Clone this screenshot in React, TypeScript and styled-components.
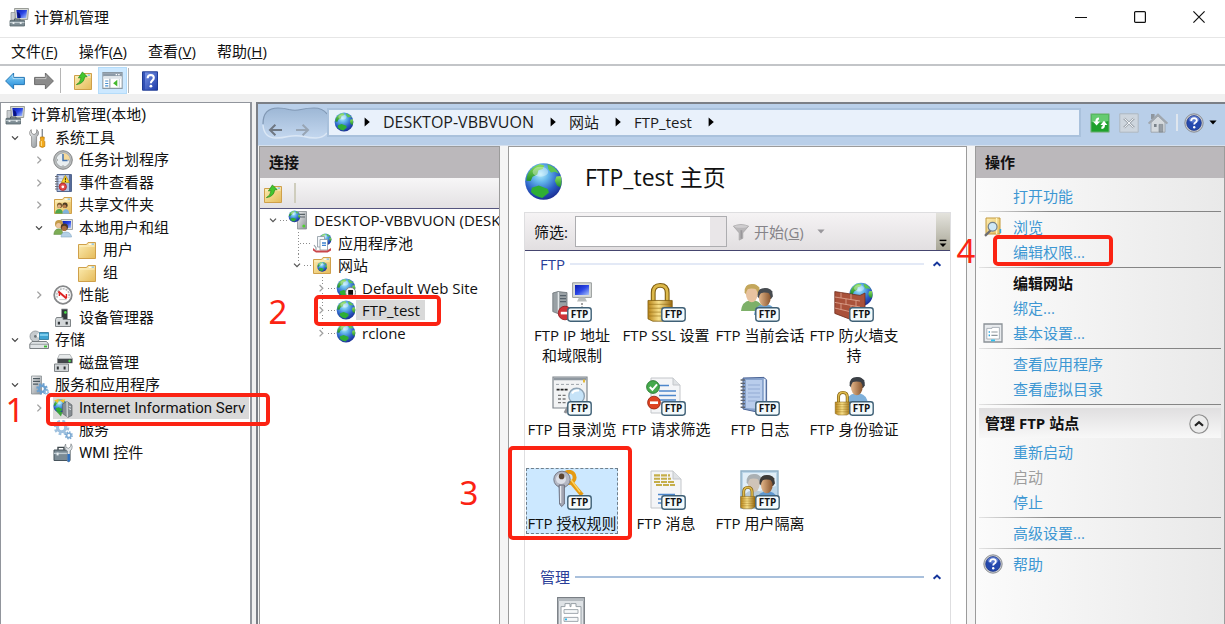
import React, { ReactNode } from "react";
import styled, { createGlobalStyle, css } from "styled-components";

const GlobalStyle = createGlobalStyle`
  *, *::before, *::after { box-sizing: border-box; }
  body {
    margin: 0;
    background: #f0f0f0;
    color: #111;
    font-family: "Open Sans", "Noto Sans CJK SC", sans-serif;
    font-size: 15px;
    line-height: 20px;
  }
  button, input, select { font: inherit; color: inherit; }
  ul { list-style: none; margin: 0; padding: 0; }
  svg { display: block; flex: none; }
`;

const plainButton = css`
  background: none;
  border: 0;
  margin: 0;
  padding: 0;
  white-space: nowrap;
`;

/* ---------- window frame ---------- */

const Window = styled.div`
  position: relative;
  display: flex;
  flex-direction: column;
  height: 100vh;
  overflow: hidden;
`;

const TitleBar = styled.header`
  display: flex;
  align-items: center;
  gap: 5px;
  flex: none;
  height: 38px;
  padding: 0 11px 3px 9px;
  background: #fff;
  border-bottom: 1px solid #e6e6e6;
`;

const Title = styled.h1`
  flex: 1;
  margin: 0;
  font-size: 15px;
  font-weight: 400;
`;

const WindowButton = styled.button`
  ${plainButton}
  display: grid;
  place-items: center;
  width: 30px;
  height: 34px;
  margin-left: 24px;
`;

const MenuBar = styled.nav`
  display: flex;
  align-items: center;
  gap: 21px;
  flex: none;
  height: 28px;
  padding: 0 11px;
  background: #fff;
  border-bottom: 2px solid #c3c5c8;
`;

const MenuButton = styled.button`
  ${plainButton}
`;

const Toolbar = styled.div`
  display: flex;
  align-items: center;
  flex: none;
  height: 28px;
  padding-left: 5px;
  background: #fff;
`;

const ToolButton = styled.button<{ $on?: boolean; $gap?: number }>`
  ${plainButton}
  display: grid;
  place-items: center;
  width: ${(p) => (p.$on ? 29 : 20)}px;
  height: 27px;
  padding-top: 1px;
  margin-left: ${(p) => p.$gap ?? 0}px;
  background: ${(p) => (p.$on ? "#cce8ff" : "none")};
  border: ${(p) => (p.$on ? "1px solid #b4dcfa" : "0")};
`;

const ToolDivider = styled.span<{ $gap: number }>`
  width: 1px;
  height: 25px;
  margin-left: ${(p) => p.$gap}px;
  background: #b5b5b5;
`;

const Workspace = styled.div`
  display: flex;
  flex: 1;
  min-height: 0;
  gap: 4px;
  padding-top: 8px;
  background: #f0f0f0;
`;

/* ---------- left tree ---------- */

const Sidebar = styled.aside`
  flex: none;
  width: 252px;
  overflow: hidden;
  padding-top: 1px;
  font-family: Roboto, "Noto Sans CJK SC", sans-serif;
  background: #fff;
  border: 2px solid #91959c;
  border-width: 1px 2px 0 1px;
`;

const SideTree = styled.ul`
  display: grid;
  grid-auto-rows: 1fr;
  min-height: 360px;
`;

const SideRow = styled.li<{ $level: number }>`
  display: flex;
  align-items: center;
  padding-left: ${(p) => (p.$level === 0 ? 4 : 4 + 24 * (p.$level - 1))}px;
`;

const Twisty = styled.span`
  display: grid;
  place-items: center;
  flex: none;
  width: 20px;
  margin-right: 4px;
`;

const TreeButton = styled.button<{ $selected?: boolean }>`
  ${plainButton}
  display: flex;
  align-items: center;
  gap: 6px;
  height: 22px;
  padding-right: 4px;
  background: ${(p) => (p.$selected ? "#d9d9d9" : "none")};
`;

/* ---------- IIS console ---------- */

const Console = styled.main`
  display: flex;
  flex-direction: column;
  flex: 1;
  min-width: 0;
  background: #f5f5f5;
  border: solid #7b7f86;
  border-width: 2px 0 0 2px;
`;

const AddressBar = styled.div`
  display: flex;
  align-items: center;
  flex: none;
  height: 42px;
  padding: 0 8px 4px 4px;
  background: #b9cfe9;
  border-bottom: 1px solid #d5e0ee;
`;

const Breadcrumb = styled.nav`
  display: flex;
  align-items: center;
  gap: 13px;
  flex: 1;
  min-width: 0;
  height: 29px;
  padding: 0 0 2px 5px;
  background: #e9f1fb;
  border: 2px solid #a9c1dc;
`;

const CrumbIcon = styled.span`
  margin-right: -3px;
`;

const Crumb = styled.a<{ $host?: boolean }>`
  padding-right: 3px;
  font-size: ${(p) => (p.$host ? 16 : 15)}px;
  color: #1c1c1c;
  text-decoration: none;
  white-space: nowrap;
`;

const AddressTools = styled.div`
  display: flex;
  align-items: center;
  gap: 9px;
  margin-left: 9px;
`;

const HelpMenu = styled.div`
  display: flex;
  align-items: center;
  gap: 5px;
`;

const AddressDivider = styled.span`
  width: 2px;
  height: 17px;
  margin: 0 -3px 0 -1px;
  background: #dfe6ee;
`;

const Panes = styled.div`
  display: flex;
  flex: 1;
  min-height: 0;
  padding-left: 1px;
  gap: 8px;
`;

const Pane = styled.section<{ $width?: number; $tint?: boolean }>`
  display: flex;
  flex-direction: column;
  flex: ${(p) => (p.$width ? "none" : "1")};
  width: ${(p) => (p.$width ? `${p.$width}px` : "auto")};
  min-width: 0;
  overflow: hidden;
  background: ${(p) => (p.$tint ? "linear-gradient(90deg, #fbfbfb, #e9e9e9)" : "#fff")};
  border: 1px solid #9b9b9b;
  border-bottom: 0;
`;

const PaneTitle = styled.h2`
  flex: none;
  margin: 0;
  height: 31px;
  padding: 5px 9px;
  font-size: 15px;
  font-weight: 700;
  background: #bbb8bb;
`;

const PaneTools = styled.div`
  display: flex;
  align-items: center;
  gap: 11px;
  flex: none;
  height: 31px;
  padding-left: 3px;
  background: linear-gradient(#f7f6f7, #e3e1e3);
  border-bottom: 1px solid #55557f;
`;

const GripLine = styled.span`
  width: 2px;
  height: 20px;
  background: #cfcdbd;
`;

const SiteTree = styled.ul`
  display: grid;
  grid-auto-rows: 1fr;
  min-height: 135px;
`;

const SiteRow = styled.li<{ $level: number }>`
  display: flex;
  align-items: center;
  padding-left: ${(p) => 6 + 24 * p.$level}px;
`;

const SiteButton = styled.button`
  ${plainButton}
  display: flex;
  align-items: center;
`;

const SiteLabel = styled.span<{ $selected?: boolean }>`
  padding: 0 5px 0 6px;
  background: ${(p) => (p.$selected ? "#d9d9d9" : "none")};
`;

/* ---------- feature view ---------- */

const PageHead = styled.div`
  display: flex;
  align-items: flex-start;
  gap: 22px;
  flex: none;
  height: 65px;
  padding: 15px 15px 0;
`;

const PageTitle = styled.h2`
  margin: 0;
  font-size: 23px;
  line-height: 30px;
  font-weight: 400;
`;

const FeatureBox = styled.div`
  display: flex;
  flex-direction: column;
  flex: 1;
  min-height: 0;
  margin: 0 15px;
  border: 1px solid #dedee0;
  border-bottom: 0;
`;

const FilterBar = styled.div`
  display: flex;
  align-items: center;
  flex: none;
  height: 38px;
  padding-left: 9px;
  background: linear-gradient(#f5f3f4, #e2dfe1);
  border-bottom: 1px solid #45456f;
`;

const FilterField = styled.div`
  display: flex;
  width: 152px;
  height: 31px;
  margin-left: 7px;
  border: 1px solid #adadb0;
`;

const FilterInput = styled.input`
  flex: 1;
  min-width: 0;
  padding: 0 4px;
  border: 0;
  background: #fff;
`;

const FilterDrop = styled.button`
  ${plainButton}
  width: 16px;
  background: #e9e6e8;
`;

const StartButton = styled.button`
  ${plainButton}
  display: flex;
  align-items: center;
  gap: 4px;
  margin-left: 5px;
  color: #868489;
`;

const Overflow = styled.button`
  ${plainButton}
  display: flex;
  align-items: flex-end;
  justify-content: center;
  align-self: stretch;
  width: 14px;
  margin-left: auto;
  padding-bottom: 2px;
  background: linear-gradient(#e4e3dd, #a9a797);
`;

const GroupHead = styled.div<{ $line: string }>`
  display: flex;
  align-items: center;
  gap: 5px;
  height: 26px;
  padding: 0 8px 0 15px;
  color: #2a3e98;

  &::after {
    content: "";
    order: 1;
    flex: 1;
    height: 2px;
    background: ${(p) => p.$line};
  }
`;

const GroupToggle = styled.button`
  ${plainButton}
  order: 2;
  padding-left: 3px;
`;

const GroupTitle = styled.h3`
  margin: 0;
  font-size: 15px;
  font-weight: 400;
`;

const Tiles = styled.div`
  display: grid;
  grid-template-columns: repeat(auto-fill, 92px);
  grid-auto-rows: 94px;
  column-gap: 2px;
  padding: 3px 40px 0 1px;
  margin-bottom: 2px;
`;

const Tile = styled.button<{ $selected?: boolean }>`
  ${plainButton}
  display: flex;
  flex-direction: column;
  align-items: center;
  align-self: start;
  min-height: 66px;
  gap: 3px;
  padding-top: 1px;
  line-height: 20px;
  white-space: pre;
  background: ${(p) => (p.$selected ? "#cce8ff" : "none")};
  border: 1px dashed ${(p) => (p.$selected ? "#6f7f8c" : "transparent")};
`;

/* ---------- actions ---------- */

const ActionBody = styled.div`
  display: flex;
  flex-direction: column;
  padding: 6px 3px 0;
`;

const actionRow = css`
  display: flex;
  align-items: center;
  height: 25px;
  padding-bottom: 2px;
`;

const ActionRow = styled.div`
  ${actionRow}
`;

const ActionIcon = styled.span`
  width: 20px;
  margin: 0 10px 0 4px;
`;

const ActionLink = styled.a`
  color: #3d97d3;
  text-decoration: none;
`;

const ActionDisabled = styled.span`
  color: #9d9d9d;
`;

const ActionHeading = styled.h3`
  ${actionRow}
  margin: 0 0 0 34px;
  font-size: 15px;
  font-weight: 700;
`;

const Rule = styled.div`
  flex: none;
  height: 6px;
  padding-top: 2px;

  &::before {
    content: "";
    display: block;
    height: 1px;
    background: linear-gradient(90deg, #e4e4e4, #858585 30%);
  }
`;

const ActionSection = styled.div`
  display: flex;
  align-items: center;
  justify-content: space-between;
  height: 30px;
  padding: 0 12px 0 6px;
  margin: 0 0 2px;
  background: linear-gradient(#e0dfe0, #f8f8f8);
`;

const SectionTitle = styled.h3`
  margin: 0;
  font-size: 15px;
  font-weight: 700;
`;

/* ---------- step markers over the window ---------- */

type Side = "left" | "right";

const Frame = styled.div<{ $side: Side; $x: number; $y: number; $w: number; $h: number }>`
  position: absolute;
  ${(p) => p.$side}: ${(p) => p.$x}px;
  top: ${(p) => p.$y}px;
  width: ${(p) => p.$w}px;
  height: ${(p) => p.$h}px;
  border: 4px solid #fb2313;
  border-radius: 5px;
  pointer-events: none;
`;

const Step = styled.span<{ $side: Side; $x: number; $y: number }>`
  position: absolute;
  ${(p) => p.$side}: ${(p) => p.$x}px;
  top: ${(p) => p.$y}px;
  width: 20px;
  text-align: center;
  color: #fb2313;
  font-family: "Noto Sans", sans-serif;
  font-size: 33px;
  line-height: 34px;
  pointer-events: none;
`;

/* ---------- drawings ---------- */

const Defs = () => (
  <svg width="0" height="0" style={{ position: "absolute" }} aria-hidden="true">
    <defs>
      <radialGradient id="sea" cx="0.42" cy="0.3" r="0.75">
        <stop offset="0" stopColor="#b4ecfc" />
        <stop offset="0.3" stopColor="#62b4ea" />
        <stop offset="0.65" stopColor="#2c5fc6" />
        <stop offset="1" stopColor="#18268c" />
      </radialGradient>
      <linearGradient id="land" x1="0" y1="0" x2="0" y2="1">
        <stop offset="0" stopColor="#8ce05a" />
        <stop offset="1" stopColor="#1f8f2c" />
      </linearGradient>
      <linearGradient id="screen" x1="0" y1="0" x2="1" y2="1">
        <stop offset="0" stopColor="#0a1db0" />
        <stop offset="0.5" stopColor="#2b46e6" />
        <stop offset="1" stopColor="#a9c4fb" />
      </linearGradient>
      <linearGradient id="folder" x1="0" y1="0" x2="1" y2="1">
        <stop offset="0" stopColor="#fdeeb4" />
        <stop offset="1" stopColor="#e5bb5a" />
      </linearGradient>
      <linearGradient id="steel" x1="0" y1="0" x2="1" y2="1">
        <stop offset="0" stopColor="#f1f2f3" />
        <stop offset="1" stopColor="#8a9095" />
      </linearGradient>
      <linearGradient id="gold" x1="0" y1="0" x2="1" y2="0">
        <stop offset="0" stopColor="#b88419" />
        <stop offset="0.45" stopColor="#f8e08a" />
        <stop offset="1" stopColor="#9a6a10" />
      </linearGradient>
      <linearGradient id="blueArrow" x1="0" y1="0" x2="0" y2="1">
        <stop offset="0" stopColor="#8fd8fb" />
        <stop offset="1" stopColor="#1d86d6" />
      </linearGradient>
      <linearGradient id="bookBlue" x1="0" y1="0" x2="1" y2="1">
        <stop offset="0" stopColor="#7f9bea" />
        <stop offset="1" stopColor="#1c3aa8" />
      </linearGradient>
      <linearGradient id="face" x1="0" y1="0" x2="1" y2="0">
        <stop offset="0" stopColor="#e3b68a" />
        <stop offset="1" stopColor="#8a562e" />
      </linearGradient>
      <linearGradient id="pill" x1="0" y1="0" x2="0" y2="1">
        <stop offset="0" stopColor="#9db7d5" />
        <stop offset="1" stopColor="#c3d7ef" />
      </linearGradient>
    </defs>
  </svg>
);

const Icon = ({ children, size = 20, box = 20 }: { children: ReactNode; size?: number; box?: number }) => (
  <svg width={size} height={size} viewBox={`0 0 ${box} ${box}`} aria-hidden="true">
    {children}
  </svg>
);

/* Globe shape centred on a 20 unit square. */
const GlobeShape = () => (
  <>
    <circle cx="10" cy="10" r="9.4" fill="url(#sea)" />
    <path d="M1.6 7Q3.4 2.6 8 1.2L10.4 1.8 9.6 3.6 7.4 4.2 6.8 6.4 4.4 7.6 3.4 9.8 1.2 9.6Z" fill="url(#land)" />
    <path d="M12 1.2Q16 2.4 18 6L15.8 5 13.8 5.4 12.4 3.4Z" fill="#5cc452" />
    <path d="M16.6 7.4L18.8 7.2Q19.8 10.2 18.6 13L17 12.2 15.8 9.8Z" fill="url(#land)" />
    <path d="M4 13.2L7.6 12 12.2 13.8 12.8 15.6 9.4 18.4Q5.8 17.8 3.6 15.4Z" fill="#2fae35" />
    <ellipse cx="8.4" cy="5" rx="4" ry="2.6" fill="#fff" opacity="0.35" />
  </>
);

const Globe = ({ size = 20 }: { size?: number }) => (
  <Icon size={size}>
    <GlobeShape />
  </Icon>
);

const ComputerIcon = () => (
  <Icon>
    <path d="M5.5 1.5H19.5L18.6 12.5H6.5Z" fill="#d6d9d5" stroke="#9a9d98" />
    <path d="M7.4 3H18L17.2 11H8.2Z" fill="url(#screen)" />
    <path d="M2 5.5H6V13H2Z" fill="#c9cdd0" stroke="#8b8f93" strokeWidth="0.7" />
    <path d="M8 5Q12 5.4 11.6 11H8.6Z" fill="#0a1480" />
    <path d="M1 13.5H15.5V19H1Z" fill="#7d8c93" stroke="#56646b" strokeWidth="0.8" />
    <path d="M1 15.6H15.5" stroke="#c5d0d4" />
    <path d="M3.6 15H5.4V17H3.6ZM10.8 15H12.6V17H10.8Z" fill="#e6ebed" />
    <path d="M5.5 13.5V12H11V13.5" fill="none" stroke="#4d5a60" />
  </Icon>
);

const ToolsIcon = () => (
  <Icon>
    <path
      d="M2.2 1.6L2.6 5.2 5 6.6 7.4 5.2 7.8 1.6Q10 3.4 9.4 6.2 9 7.8 7.6 8.6V18Q6.8 19.6 5 19.6 3 19.6 2.6 18V8.6Q.8 7.4.6 5.4.6 3 2.2 1.6Z"
      fill="url(#steel)"
      stroke="#777"
      strokeWidth="0.7"
    />
    <path d="M12.6 1H14V9H12.6Z" fill="#888e94" />
    <path d="M11.4 9H15.2V11.4L14.6 12 15.8 13.6V18.4Q13.4 20.4 10.8 18.4V13.6L12 12 11.4 11.4Z" fill="#f3a91c" stroke="#b87709" strokeWidth="0.7" />
    <path d="M12.4 13V18" stroke="#ffe08a" />
  </Icon>
);

const ClockIcon = () => (
  <Icon>
    <circle cx="10" cy="10" r="9.3" fill="#b9bcbd" stroke="#77797a" strokeWidth="0.9" />
    <circle cx="10" cy="10" r="7" fill="#e9eef0" stroke="#85898b" strokeWidth="0.6" />
    <path d="M10 10V3A7 7 0 0 1 17 10Z" fill="#f5d99a" />
    <path d="M10 4V10.6H14.6" fill="none" stroke="#4573ad" strokeWidth="1.5" />
    <path d="M4 10H5M15.4 10H16M10 15.4V16.4" stroke="#777" />
  </Icon>
);

const EventIcon = () => (
  <Icon>
    <path d="M4 1.5H18.5V18.5H4Z" fill="#aebfe0" stroke="#54688f" />
    <path d="M17 2V18" stroke="#3e558a" strokeWidth="1.6" />
    <path d="M6 4H10M6 7H9M6 10H8" stroke="#fff" />
    <path d="M2 3.5H5.4M2 6H5.4M2 8.5H5.4M2 11H5.4M2 13.5H5.4M2 16H5.4" stroke="#6a6f78" strokeWidth="1.1" />
    <path d="M12.4 2.4L16.6 9.6H8.4Z" fill="#ffd52e" stroke="#b18f08" strokeWidth="0.7" />
    <path d="M12.4 4.8V7.4M12.4 8V9" stroke="#3a3000" />
    <circle cx="9.8" cy="13.8" r="3.7" fill="#e24a4a" stroke="#a31919" strokeWidth="0.7" />
    <circle cx="9.8" cy="13.8" r="1.4" fill="#fff" />
  </Icon>
);

const FolderShape = () => (
  <>
    <path d="M1.5 18.5V4.5H9.5L11 2.5H18.5V18.5Z" fill="url(#folder)" stroke="#cfa04a" />
    <path d="M11.6 3.4H17.4V5H11.6Z" fill="#fffbe6" />
    <path d="M14.6 3.6H17V4.6H14.6Z" fill="#5aa8e0" />
    <path d="M2.4 6H17.6" stroke="#fff4c8" />
  </>
);

const FolderIcon = () => (
  <Icon>
    <FolderShape />
  </Icon>
);

const SharedFolderIcon = () => (
  <Icon>
    <FolderShape />
    <circle cx="6.6" cy="10.4" r="2.6" fill="#7d5a2c" />
    <circle cx="12" cy="10.2" r="2.6" fill="#4d3b22" />
    <circle cx="6.2" cy="11.2" r="1.7" fill="#e0b184" />
    <circle cx="11.6" cy="11.2" r="1.7" fill="#b97c4a" />
    <path d="M2 18.6Q2.6 14 6.4 14 9.6 14 10 18.6Z" fill="#4fa64d" />
    <path d="M9.4 18.8Q10 14.2 12.8 14.2 16 14.4 16.4 18.8Z" fill="#7fb2dd" />
  </Icon>
);

const UsersIcon = () => (
  <Icon>
    <path d="M8 1.5H19.5V11.5H8Z" fill="#dfe1e0" stroke="#a3a6a5" />
    <path d="M9.4 3H18V10H9.4Z" fill="url(#screen)" />
    <circle cx="6" cy="6" r="4" fill="#c49b48" />
    <circle cx="5.6" cy="7.4" r="2.5" fill="#ecc5a0" />
    <path d="M0.8 16.4Q1.4 10.8 5.8 10.8 9.6 10.8 9.8 16.4Z" fill="#7dad55" stroke="#578338" strokeWidth="0.5" />
    <circle cx="11.4" cy="9" r="3.6" fill="#4b3926" />
    <circle cx="11.2" cy="10.4" r="2.6" fill="#a86c3e" />
    <path d="M8 19Q8.4 14 13 14 17.8 14 18.6 19Z" fill="#b4d0e6" stroke="#86a9c6" strokeWidth="0.6" />
  </Icon>
);

const GaugeIcon = () => (
  <Icon>
    <circle cx="10" cy="10" r="8.8" fill="#fff" stroke="#858789" strokeWidth="1.8" />
    <path d="M4.4 12.6A6.2 6.2 0 1 1 15.6 12.6" fill="none" stroke="#b9bcbe" strokeWidth="1.6" strokeDasharray="2 1" />
    <path d="M5.4 6.4L13.6 13.6" stroke="#d22" strokeWidth="2" />
    <path d="M6.4 11V7.6M13.4 13V9" stroke="#d22" strokeWidth="1.4" />
    <path d="M6.4 14.6H13.6" stroke="#ccc" />
  </Icon>
);

const DeviceIcon = () => (
  <Icon>
    <path d="M8.5 1H14.5V11.5H8.5Z" fill="#33383b" stroke="#9a9ea1" strokeWidth="0.8" />
    <circle cx="12.4" cy="4.4" r="1.3" fill="#4be04b" />
    <path d="M3.5 9.5H10V11.5H17.5V18.5H2.5V11.5Z" fill="#d2d6d8" stroke="#7f8487" />
    <path d="M4.8 13.8H7V16.6H4.8ZM12.6 13.8H14.8V16.6H12.6Z" fill="#32373a" />
  </Icon>
);

const StorageIcon = () => (
  <Icon>
    <circle cx="6.4" cy="6.4" r="5.4" fill="#c6cbce" stroke="#8a9194" strokeWidth="0.8" />
    <path d="M6.4 6.4L10 2.4A5.4 5.4 0 0 1 11.4 8Z" fill="#f2f5f6" />
    <circle cx="6.4" cy="6.4" r="1.4" fill="#6d7478" />
    <path d="M10.5 2.5H19.5V9.5H10.5Z" fill="#3fa4d2" stroke="#2a7396" strokeWidth="0.8" />
    <path d="M10.8 5H19" stroke="#8ed8f4" strokeWidth="1.6" />
    <path d="M3 11.5H17.5L19.5 14V18.5H0.8V14Z" fill="#dfe3e5" stroke="#6d7376" strokeWidth="0.9" />
    <path d="M1 14.3H19.4" stroke="#8b9194" strokeWidth="0.8" />
    <path d="M15 15.6H18V17.4H15Z" fill="#3bb931" />
  </Icon>
);

const DiskIcon = () => (
  <Icon>
    <path d="M6.4 1.5H17L19.5 6H4.4Z" fill="#e6e9ea" stroke="#9da2a5" strokeWidth="0.7" />
    <path d="M4.4 5.8H19.5V10.2H4.4Z" fill="#43484b" />
    <circle cx="16.6" cy="8" r="1.2" fill="#4be04b" />
    <path d="M1.5 11H15.5V18.5H1.5Z" fill="#d2d6d8" stroke="#7f8487" />
    <path d="M3.8 13.6H5.8V16.4H3.8ZM10.6 13.6H12.6V16.4H10.6Z" fill="#32373a" />
  </Icon>
);

const Gear = ({ x, y, r, fill }: { x: number; y: number; r: number; fill: string }) => (
  <g transform={`translate(${x} ${y})`}>
    <circle r={r} fill="none" stroke={fill} strokeWidth={r * 0.5} strokeDasharray={`${r * 0.42} ${r * 0.365}`} />
    <circle r={r * 0.66} fill="none" stroke={fill} strokeWidth={r * 0.5} />
  </g>
);

const ServerAppsIcon = () => (
  <Icon>
    <path d="M2.5 1H12.5V19H2.5Z" fill="url(#steel)" stroke="#8c9296" strokeWidth="0.8" />
    <path d="M4 3.6H11M4 6.4H11M4 9.2H9" stroke="#4e5a61" strokeWidth="1.3" />
    <Gear x={13} y={13.8} r={4.6} fill="#6ba0cf" />
    <Gear x={17.6} y={17} r={2.2} fill="#8dbbe0" />
  </Icon>
);

const IisIcon = () => (
  <Icon>
    <g transform="scale(.72) translate(0 1)">
      <GlobeShape />
    </g>
    <path d="M1 2.6L5.8.8 5 4.8ZM6.6 2L10.4 5 12.4 1.2Z" fill="#f4c330" />
    <path d="M9.6 6L14 3.4 19 7V17.4L15 19.4 9.6 15.6Z" fill="#878e93" stroke="#5e6468" strokeWidth="0.7" />
    <path d="M14 3.4L14.4 19" stroke="#cdd3d6" strokeWidth="1.4" />
    <path d="M15.8 8L18 9M15.8 10.6L18 11.6" stroke="#e0e4e6" />
    <path d="M3 13L8 18.6 9.4 14Z" fill="#3ca53a" />
  </Icon>
);

const GearsIcon = () => (
  <Icon>
    <Gear x={8.6} y={7.6} r={6.2} fill="#9fc1df" />
    <Gear x={15.8} y={15.4} r={3.3} fill="#7fabd3" />
  </Icon>
);

const WmiIcon = () => (
  <Icon>
    <path d="M5 7V4.4H11V7" fill="none" stroke="#3f484d" strokeWidth="1.4" />
    <path d="M1 7H17V17.5H1Z" fill="#7b8b95" stroke="#47545c" />
    <path d="M1 10.4H17" stroke="#bfcbd2" strokeWidth="1.4" />
    <path d="M3.6 9.6H5.6V12.4H3.6Z" fill="#e9eef1" />
    <path d="M12.6 1L13 4.4 15.4 5.4 17.6 3.6 18 .8Q20 3.4 18.8 6 18 7.4 17 7.8V17.6Q16 20 14.4 18.4V8Q11.6 6.4 11.6 3.6Z" fill="#e1e5e8" stroke="#7b8286" strokeWidth="0.7" />
    <path d="M14.4 11H17V18Q15.8 20 14.4 18Z" fill="#2f71c0" />
  </Icon>
);

const ArrowIcon = ({ forward }: { forward?: boolean }) => (
  <Icon>
    <path
      d={forward ? "M19.4 10L11.4 2V6.4H.6V13.6H11.4V18Z" : "M.6 10L8.6 2V6.4H19.4V13.6H8.6V18Z"}
      fill={forward ? "#8b8b8b" : "url(#blueArrow)"}
      stroke={forward ? "#6b6b6b" : "#2577b5"}
      strokeLinejoin="round"
    />
    <path d={forward ? "M1.6 7.6H12V4.4" : "M8 4.4V7.6H18.4"} fill="none" stroke="#fff" opacity="0.45" />
  </Icon>
);

const FolderUpIcon = () => (
  <Icon>
    <FolderShape />
    <path d="M3.4 13.6Q7.6 12 8 6.6L5.4 7 9.4 1 14.2 5.6 11.6 6Q11 12.6 3.4 13.6Z" fill="#43c62e" stroke="#238a17" strokeWidth="0.7" />
  </Icon>
);

const PanelIcon = () => (
  <Icon size={21}>
    <path d="M.8 2.5H19.2V17.5H.8Z" fill="#fff" stroke="#8a98a3" />
    <path d="M1 3H19V6H1Z" fill="#8d9ba8" />
    <path d="M13 4.4H14.4M15.4 4.4H16.8" stroke="#fff" />
    <path d="M1.4 6.4H18.6V8.4H1.4Z" fill="#dfe5ea" />
    <path d="M7.5 8.4V17" stroke="#8a98a3" />
    <path d="M3 10.5H6M3 12.8H6M3 15.1H6" stroke="#4a90cf" />
    <path d="M14.6 9.4V15.8L10.6 12.6Z" fill="#44b82e" />
    <path d="M16.5 8.5V17" stroke="#c9d0d6" />
  </Icon>
);

const HelpBookIcon = () => (
  <Icon>
    <path d="M2.5.8H17.5V19.2H2.5Z" fill="url(#bookBlue)" stroke="#1f3b94" />
    <path d="M4 1V19" stroke="#2746ae" strokeWidth="1.6" />
    <path d="M7.6 7.2Q7.8 4 10.8 4 13.8 4.2 13.8 6.8 13.8 8.4 12.2 9.6 10.9 10.6 10.9 12.2" fill="none" stroke="#fff" strokeWidth="2.1" />
    <circle cx="10.9" cy="15.2" r="1.4" fill="#fff" />
  </Icon>
);

const HelpCircleIcon = () => (
  <Icon>
    <circle cx="10" cy="10" r="9.2" fill="#c9ccd0" stroke="#83878c" strokeWidth="0.9" />
    <circle cx="10" cy="10" r="7.4" fill="#2448ad" stroke="#172f7c" strokeWidth="0.6" />
    <ellipse cx="10" cy="6.4" rx="5.4" ry="3.4" fill="#7e9be4" opacity="0.6" />
    <path d="M7.2 8Q7.2 5.2 10.2 5.2 12.8 5.4 12.8 7.4 12.8 8.8 11.2 9.8 10.2 10.4 10.2 11.6" fill="none" stroke="#fff" strokeWidth="1.8" />
    <circle cx="10.2" cy="14.2" r="1.2" fill="#fff" />
  </Icon>
);

const RefreshIcon = () => (
  <Icon>
    <path d="M.8.8H19.2V19.2H.8Z" fill="#1fa12c" stroke="#8fb99a" />
    <path d="M1.6 1.6H18.4V8Q10 11 1.6 9Z" fill="#7ed987" opacity="0.75" />
    <path d="M9 4.4Q5.4 4.4 5.4 8.4H3L6.6 12.4 10 8.4H7.6Q7.6 6.8 9 6.6Z" fill="#fff" />
    <path d="M11.4 16Q15 16 15 12H17.4L14 7.8 10.4 12H12.8Q12.8 13.6 11.4 13.8Z" fill="#fff" />
  </Icon>
);

const StopIcon = () => (
  <Icon>
    <path d="M.8.8H19.2V19.2H.8Z" fill="#ced6de" stroke="#aeb8c1" />
    <path d="M5 5.4L15 14.6M15 5.4L5 14.6" stroke="#a3abb3" strokeWidth="2.6" />
    <path d="M5.4 5.4L14.6 14.6M14.6 5.4L5.4 14.6" stroke="#eef1f4" strokeWidth="1" />
  </Icon>
);

const HomeIcon = () => (
  <Icon>
    <path d="M3 1H6.6V6H3Z" fill="#8e969e" />
    <path d="M3 9.6L10 3 17 9.6V19.2H3Z" fill="#d5dade" stroke="#9ba3aa" strokeWidth="0.9" />
    <path d="M.6 10.6L10 1.6 19.4 10.6" fill="none" stroke="#a0a7ae" strokeWidth="2" />
    <path d="M6 11H8.6V14H6Z" fill="#7b838a" />
    <path d="M11 11.4H14.8V19H11Z" fill="#979ea5" stroke="#7b838a" strokeWidth="0.6" />
  </Icon>
);

const NavPill = () => (
  <svg width="65" height="36" viewBox="0 0 65 36" aria-hidden="true">
    <path d="M1 18Q1 3 16 3 22 3 27 4.5 33 6 39 4.5 45 3 52 3 61 3 65 9V28Q61 33 54 33 47 33 42 31.5 34 30 26 31.5 20 33 14 33 1 32 1 18Z" fill="url(#pill)" />
    <path d="M1 19Q1 3 16 3 22 3 27 4.5 33 6 39 4.5 45 3 52 3 61 3 65 9" fill="none" stroke="#8198b4" strokeWidth="1.2" />
    <path d="M1 20Q2 33 14 33 20 33 26 31.5 34 30 42 31.5 47 33 54 33 61 33 65 28" fill="none" stroke="#dbe7f5" strokeWidth="1.4" />
    <path d="M20 25H8.4M13.4 19.8L8 25 13.4 30.2" fill="none" stroke="#6f7782" strokeWidth="2" />
    <path d="M34 25H45.6M40.6 19.8L46 25 40.6 30.2" fill="none" stroke="#98a5b4" strokeWidth="2" />
  </svg>
);

const CrumbArrow = () => (
  <svg width="6" height="10" viewBox="0 0 6 10" aria-hidden="true">
    <path d="M.6.4L5.8 5 .6 9.6Z" fill="#000" />
  </svg>
);

const DownArrow = ({ color }: { color: string }) => (
  <svg width="8" height="5" viewBox="0 0 8 5" aria-hidden="true">
    <path d="M.4.4H7.6L4 4.6Z" fill={color} />
  </svg>
);

const Chevron = ({ open }: { open: boolean }) => (
  <svg width="10" height="10" viewBox="0 0 10 10" aria-hidden="true">
    <path
      d={open ? "M2 3.4L5 6.4 8 3.4" : "M3.4 1.6L6.8 5 3.4 8.4"}
      fill="none"
      stroke={open ? "#444" : "#a0a0a0"}
      strokeWidth="1.3"
    />
  </svg>
);

/* Expander plus the dotted guide lines that join a node to its parent. */
const Branch = ({ state, above, below }: { state: "open" | "closed" | "leaf"; above?: boolean; below?: boolean }) => (
  <svg width="22" height="22" viewBox="0 0 22 22" aria-hidden="true">
    <g stroke="#8c8c8c" strokeDasharray="1 2">
      {above && <path d="M8.5 0V7" />}
      {state === "leaf" && <path d="M8.5 0V22" />}
      {below && <path d="M8.5 16V22" />}
      <path d={state === "leaf" ? "M10 11.5H22" : "M14 11.5H22"} />
    </g>
    {state === "open" && <path d="M4 9.6L7 12.6 10 9.6" fill="none" stroke="#555" strokeWidth="1.3" />}
    {state === "closed" && <path d="M5.6 8L8.8 11.2 5.6 14.4" fill="none" stroke="#a0a0a0" strokeWidth="1.3" />}
  </svg>
);

const HostIcon = () => (
  <Icon>
    <path d="M9.5 1.5H18.5V19H9.5Z" fill="url(#steel)" stroke="#868d91" strokeWidth="0.8" />
    <path d="M11 4.4H17M11 7H17" stroke="#5a6368" strokeWidth="1.2" />
    <circle cx="15.8" cy="16" r="1.5" fill="#4fd12e" />
    <g transform="translate(.2 .2) scale(.62)">
      <GlobeShape />
    </g>
  </Icon>
);

const AppPoolIcon = () => (
  <Icon>
    <g transform="translate(7 0) scale(.64)">
      <GlobeShape />
    </g>
    <path d="M5.5 3.5H12.5V14H5.5Z" fill="#f4f7fa" stroke="#8c979f" strokeWidth="0.8" />
    <path d="M8 6.5H15.5V17H8Z" fill="#fff" stroke="#8c979f" strokeWidth="0.8" />
    <path d="M10 10H14M10 12.4H14" stroke="#3f83d0" strokeWidth="1.3" />
    <path d="M1 15L4 17.6H15L19 15V17.4L15.6 19.4H4L1 17.4Z" fill="#c9464a" />
    <path d="M2 12L4 14.6V17" fill="none" stroke="#9aa3aa" strokeWidth="1.2" />
  </Icon>
);

const SitesIcon = () => (
  <Icon>
    <FolderShape />
    <g transform="translate(5 6.6) scale(.52)">
      <GlobeShape />
    </g>
  </Icon>
);

const StoppedSiteIcon = () => (
  <Icon>
    <GlobeShape />
    <circle cx="14.6" cy="14.4" r="5" fill="#f4f4f4" stroke="#7d7d7d" strokeWidth="0.9" />
    <path d="M12.2 12H17V16.8H12.2Z" fill="#111" />
  </Icon>
);

const FunnelIcon = () => (
  <Icon size={18}>
    <path d="M1.5 3.5Q10 0 18.5 3.5L12 11V17L8 19V11Z" fill="#b9b7b9" stroke="#a5a3a5" strokeWidth="0.8" />
    <ellipse cx="10" cy="3.8" rx="7.4" ry="1.6" fill="#cfcdcf" />
    <path d="M10.4 8V17.4" stroke="#99979a" strokeWidth="2" />
  </Icon>
);

const BrowseIcon = () => (
  <Icon>
    <path d="M3 1H17V17H3Z" fill="url(#folder)" stroke="#c39a3c" />
    <path d="M13.6 1V17" stroke="#fff3bd" strokeWidth="1.4" />
    <path d="M8 13L2 18.8" stroke="#6d6d72" strokeWidth="2.4" />
    <circle cx="9.6" cy="9.8" r="4.4" fill="#cfe8f8" stroke="#73808c" strokeWidth="1.2" />
    <path d="M17.4 12V16" stroke="#36a6e2" strokeWidth="1.6" />
  </Icon>
);

const SettingsIcon = () => (
  <Icon>
    <path d="M1 1H19V19H1Z" fill="#e8ebee" stroke="#8b9197" strokeWidth="1.3" />
    <path d="M3.8 5.4H9V4.4H16.4V16H3.8Z" fill="#fff" stroke="#a5adb3" strokeWidth="0.9" />
    <path d="M5.6 9H7M5.6 12.4H7" stroke="#2fa6e0" strokeWidth="1.6" />
    <path d="M8.4 9H14.6M8.4 12.4H14.6" stroke="#8f979e" strokeWidth="1.2" />
    <path d="M8 17.4H12" stroke="#2fc0f0" strokeWidth="1.8" />
  </Icon>
);

const CollapseIcon = () => (
  <Icon>
    <circle cx="10" cy="10" r="9.2" fill="#ececec" stroke="#8e8e8e" strokeWidth="1.1" />
    <path d="M6 11.8L10 8.2 14 11.8" fill="none" stroke="#222" strokeWidth="2.2" />
  </Icon>
);

/* Tile art, drawn on a 40 unit square. */

const FtpBadge = () => (
  <g>
    <rect x="15.8" y="25.8" width="23.4" height="13.4" rx="2.6" fill="#f4fafc" stroke="#3f6076" strokeWidth="1.4" />
    <text x="27.6" y="36.2" textAnchor="middle" fontFamily="Open Sans, sans-serif" fontWeight="700" fontSize="10" fill="#111">
      FTP
    </text>
  </g>
);

const Padlock = ({ x = 0, y = 0, scale = 1 }: { x?: number; y?: number; scale?: number }) => (
  <g transform={`translate(${x} ${y}) scale(${scale})`}>
    <path d="M6.4 20V10Q6.4 2.4 13.6 2.4 20.8 2.4 20.8 10V20" fill="none" stroke="#7d5c10" strokeWidth="5" />
    <path d="M6.4 20V10Q6.4 2.4 13.6 2.4 20.8 2.4 20.8 10V20" fill="none" stroke="#dcb84a" strokeWidth="2.8" />
    <path d="M1 18H26V36L20 39.4H6L1 37Z" fill="url(#gold)" stroke="#7d5c10" strokeWidth="0.8" />
    <path d="M2 22H25M2 26H25M2 30H25M2 34H25" stroke="#916b13" strokeWidth="0.9" opacity="0.65" />
  </g>
);

const Person = ({ x, y, hair, shirt, skin = "url(#face)" }: { x: number; y: number; hair: string; shirt: string; skin?: string }) => (
  <g transform={`translate(${x} ${y})`}>
    <path d="M0 28Q1 18.6 8.6 17.6L14 17.6Q21 19 22 28Z" fill={shirt} />
    <path d="M3.6 9.6Q3 1 11 1 19.4 1 18.8 9.6L17 12H5.4Z" fill={hair} />
    <ellipse cx="10.8" cy="11.6" rx="5.8" ry="7.6" fill={skin} />
    <path d="M4.6 8Q8 3.6 17.2 7L18.6 4.6 13 1.2 6 2.6Z" fill={hair} />
  </g>
);

const IpArt = () => (
  <>
    <path d="M.8 11L6 9.6 15 10.6V30L7 32 .8 29.6Z" fill="#9aa1a5" stroke="#6b7276" strokeWidth="0.8" />
    <path d="M6.4 10V31.6" stroke="#e5e9eb" strokeWidth="1.4" />
    <path d="M8 13.6H14M8 16.6H14M8 19.6H14" stroke="#55606a" strokeWidth="1.2" />
    <path d="M20.6.8H39.4V15.4H20.6Z" fill="#d9dcdb" stroke="#989c9b" />
    <path d="M23 3H37V13H23Z" fill="url(#screen)" />
    <path d="M27 15.4H33L35 19.4H25Z" fill="#b9bdbc" />
    <path d="M30 21V26" stroke="#444" strokeDasharray="2 1.4" />
    <circle cx="13" cy="31" r="6.8" fill="#d03338" stroke="#8e1519" strokeWidth="0.8" />
    <path d="M8.8 29.8H17V32.4H8.8Z" fill="#fff" />
    <FtpBadge />
  </>
);

const SslArt = () => (
  <>
    <Padlock x={1} y={1} scale={0.97} />
    <FtpBadge />
  </>
);

const SessionsArt = () => (
  <>
    <Person x={1} y={1} hair="#c4a75c" shirt="#7db069" skin="#e8c3a0" />
    <Person x={14} y={5} hair="#474b50" shirt="#6ea3d0" />
    <FtpBadge />
  </>
);

const FirewallArt = () => (
  <>
    <g transform="translate(14.6 0) scale(1.24)">
      <GlobeShape />
    </g>
    <path d="M.8 9.6L26 13.4 31 11V29L18 38 .8 31.4Z" fill="#a9513a" stroke="#6e2c1c" strokeWidth="0.8" />
    <path d="M.8 15L26 19M.8 20.4L26 25M.8 26L24 31.6" stroke="#dba08c" strokeWidth="0.9" />
    <path d="M7 10.6V16M17 12V17.6M12 16.8V22.6M22 18.4V24.6M7 21.6V27.4M17 23.4V30" stroke="#dba08c" strokeWidth="0.9" />
    <FtpBadge />
  </>
);

const DirectoryArt = () => (
  <>
    <path d="M1 1H35V31L17 32H1Z" fill="#f2f3f4" stroke="#7f868c" strokeWidth="1.2" />
    <path d="M1.6 1.6H34.4V4.2H1.6Z" fill="#8f98a0" />
    <path d="M4 8.4H30" stroke="#9da4aa" strokeDasharray="3 2" />
    <path d="M32 3.6V6.6" stroke="#e3b83a" strokeWidth="2" />
    <path d="M4.6 13.6H16" stroke="#222" strokeWidth="1.6" strokeDasharray="3 1" />
    <path d="M6 19.4H14M6 23H14M6 26.6H14" stroke="#777" strokeWidth="1.4" strokeDasharray="3 1.6" />
    <circle cx="24.6" cy="20" r="7.8" fill="#c6e3f8" stroke="#8fa3b4" strokeWidth="1.4" />
    <path d="M20 17.4Q22 14 27 14.6" fill="none" stroke="#fff" strokeWidth="2" />
    <path d="M18.4 27L13 37" stroke="#8f8f94" strokeWidth="3" />
    <FtpBadge />
  </>
);

const RequestArt = () => (
  <>
    <path d="M5 2H27L34 9V37H5Z" fill="#f4f5f7" stroke="#c3c6ca" />
    <path d="M27 2V9H34" fill="#dfe2e5" stroke="#c3c6ca" />
    <path d="M13 9.6H23M13 15H30M13 19.6H30M13 24H30" stroke="#4d87cc" strokeWidth="1.5" />
    <circle cx="7" cy="11" r="6.4" fill="#45a94c" stroke="#1e7026" strokeWidth="0.8" />
    <path d="M3.8 11L6.4 13.8 11 8.4" fill="none" stroke="#fff" strokeWidth="2" />
    <circle cx="8" cy="26.6" r="6.4" fill="#dd4322" stroke="#951f0a" strokeWidth="0.8" />
    <path d="M4 25.4H12V28H4Z" fill="#fff" />
    <FtpBadge />
  </>
);

const LogArt = () => (
  <>
    <path d="M3 2L24 1.4 26.6 4V32L17 36 3 33Z" fill="#88a3cd" stroke="#4c6596" />
    <path d="M6 4H22V33L6 32Z" fill="#b9cdec" />
    <path d="M8 9H20M8 13H20M8 17H20M8 21H20M8 25H17" stroke="#93acd4" strokeWidth="1.1" />
    <path d="M24.6 3V30" stroke="#e6eefa" strokeWidth="1.6" />
    <path d="M.6 4H5M.6 7.4H5M.6 10.8H5M.6 14.2H5M.6 17.6H5M.6 21H5M.6 24.4H5M.6 27.8H5M.6 31.2H5" stroke="#60656d" strokeWidth="1.4" />
    <FtpBadge />
  </>
);

const AuthArt = () => (
  <>
    <Person x={12} y={0} hair="#3c4046" shirt="#7fb0da" />
    <Padlock x={0.6} y={15} scale={0.61} />
    <FtpBadge />
  </>
);

const RulesArt = () => (
  <>
    <circle cx="17" cy="7.4" r="5.6" fill="none" stroke="#e59a12" strokeWidth="4" />
    <path d="M19 12L30 25" stroke="#e59a12" strokeWidth="4.2" />
    <path d="M18.4 9L28 22" stroke="#ffd35e" strokeWidth="1.4" />
    <circle cx="10" cy="9.4" r="8.2" fill="#b4b7c3" stroke="#767a88" strokeWidth="1" />
    <circle cx="9" cy="9" r="5" fill="#dcdfe8" />
    <circle cx="9.6" cy="6.4" r="2.8" fill="#5b4634" />
    <path d="M7 15H12.4V34L9.6 36.6 7.6 34Z" fill="#a3a6b3" stroke="#666a78" strokeWidth="0.9" />
    <path d="M8.6 16V33" stroke="#e8eaf0" strokeWidth="1.3" />
    <FtpBadge />
  </>
);

const MessagesArt = () => (
  <>
    <path d="M5 1H27L35 9V38H5Z" fill="#f4f5f7" stroke="#c3c6ca" />
    <path d="M27 1V9H35" fill="#dfe2e5" stroke="#c3c6ca" />
    <path d="M8 5.4H24M8 8.8H25M8 12H29M10 15H29" stroke="#c5ae4a" strokeWidth="2.1" strokeDasharray="6 1" />
    <path d="M12 24.6H29M12 29H18M12 33H16" stroke="#4d87cc" strokeWidth="1.5" />
    <FtpBadge />
  </>
);

const IsolationArt = () => (
  <>
    <path d="M1 1H38V38H1Z" fill="#bcd6e8" stroke="#8fb0c6" strokeWidth="1.4" />
    <path d="M3 3H36V16L3 26Z" fill="#e1eef7" />
    <Person x={3} y={3} hair="#aab0b3" shirt="#b9cbd8" skin="#cfc4b8" />
    <Person x={16} y={4} hair="#3d3a38" shirt="#5e97cf" />
    <Padlock x={0} y={16} scale={0.58} />
    <FtpBadge />
  </>
);

const ConfigArt = () => (
  <>
    <path d="M5.8 2.8H32.2V42H5.8Z" fill="#dfe3e6" stroke="#797f85" strokeWidth="1.5" />
    <path d="M6 3.4H32V6H6Z" fill="#b5bbc0" />
    <path d="M9 11.6H13V8.6H18V11.6H19V8.6H24V11.6H29V42H9Z" fill="#fff" stroke="#98a0a6" />
    <path d="M12 14.6H26V18.4H12ZM12 22.4H26V26.4H12ZM12 30H26V34H12Z" fill="#f6f8f9" stroke="#98a0a6" strokeWidth="0.9" />
    <path d="M13 24.4H15M13 32H15" stroke="#2fb6ea" strokeWidth="1.6" />
  </>
);

/* ---------- content ---------- */

type Node = { label: string; level: number; icon: ReactNode; open?: boolean; selected?: boolean };

const sideNodes: Node[] = [
  { label: "计算机管理(本地)", level: 0, icon: <ComputerIcon /> },
  { label: "系统工具", level: 1, icon: <ToolsIcon />, open: true },
  { label: "任务计划程序", level: 2, icon: <ClockIcon />, open: false },
  { label: "事件查看器", level: 2, icon: <EventIcon />, open: false },
  { label: "共享文件夹", level: 2, icon: <SharedFolderIcon />, open: false },
  { label: "本地用户和组", level: 2, icon: <UsersIcon />, open: true },
  { label: "用户", level: 3, icon: <FolderIcon /> },
  { label: "组", level: 3, icon: <FolderIcon /> },
  { label: "性能", level: 2, icon: <GaugeIcon />, open: false },
  { label: "设备管理器", level: 2, icon: <DeviceIcon /> },
  { label: "存储", level: 1, icon: <StorageIcon />, open: true },
  { label: "磁盘管理", level: 2, icon: <DiskIcon /> },
  { label: "服务和应用程序", level: 1, icon: <ServerAppsIcon />, open: true },
  { label: "Internet Information Serv", level: 2, icon: <IisIcon />, open: false, selected: true },
  { label: "服务", level: 2, icon: <GearsIcon /> },
  { label: "WMI 控件", level: 2, icon: <WmiIcon /> },
];

const siteNodes: (Omit<Node, "open"> & { branch: ReactNode })[] = [
  { label: "DESKTOP-VBBVUON (DESK", level: 0, icon: <HostIcon />, branch: <Branch state="open" /> },
  { label: "应用程序池", level: 1, icon: <AppPoolIcon />, branch: <Branch state="leaf" /> },
  { label: "网站", level: 1, icon: <SitesIcon />, branch: <Branch state="open" above /> },
  { label: "Default Web Site", level: 2, icon: <StoppedSiteIcon />, branch: <Branch state="closed" above below /> },
  { label: "FTP_test", level: 2, icon: <Globe />, branch: <Branch state="closed" above below />, selected: true },
  { label: "rclone", level: 2, icon: <Globe />, branch: <Branch state="closed" above /> },
];

const ftpTiles: { label: string; art: ReactNode; selected?: boolean }[] = [
  { label: "FTP IP 地址\n和域限制", art: <IpArt /> },
  { label: "FTP SSL 设置", art: <SslArt /> },
  { label: "FTP 当前会话", art: <SessionsArt /> },
  { label: "FTP 防火墙支\n持", art: <FirewallArt /> },
  { label: "FTP 目录浏览", art: <DirectoryArt /> },
  { label: "FTP 请求筛选", art: <RequestArt /> },
  { label: "FTP 日志", art: <LogArt /> },
  { label: "FTP 身份验证", art: <AuthArt /> },
  { label: "FTP 授权规则", art: <RulesArt />, selected: true },
  { label: "FTP 消息", art: <MessagesArt /> },
  { label: "FTP 用户隔离", art: <IsolationArt /> },
];

const menus = [
  ["文件", "F"],
  ["操作", "A"],
  ["查看", "V"],
  ["帮助", "H"],
];

const Action = ({ icon, children }: { icon?: ReactNode; children: ReactNode }) => (
  <ActionRow>
    <ActionIcon>{icon}</ActionIcon>
    <ActionLink href="#">{children}</ActionLink>
  </ActionRow>
);

const Group = ({ title, line, children }: { title: string; line: string; children: ReactNode }) => (
  <section>
    <GroupHead $line={line}>
      <GroupTitle>{title}</GroupTitle>
      <GroupToggle aria-label={`折叠 ${title}`}>
        <svg width="10" height="8" viewBox="0 0 10 8" aria-hidden="true">
          <path d="M1.6 5.8L5 2.6 8.4 5.8" fill="none" stroke="#17379c" strokeWidth="2" />
        </svg>
      </GroupToggle>
    </GroupHead>
    <Tiles>{children}</Tiles>
  </section>
);

export default function App() {
  return (
    <>
      <GlobalStyle />
      <Defs />
      <Window>
        <TitleBar>
          <ComputerIcon />
          <Title>计算机管理</Title>
          <WindowButton aria-label="最小化">
            <svg width="12" height="12" viewBox="0 0 12 12">
              <path d="M0 6.5H12" stroke="#111" />
            </svg>
          </WindowButton>
          <WindowButton aria-label="最大化">
            <svg width="12" height="12" viewBox="0 0 12 12">
              <rect x="0.6" y="0.6" width="10.8" height="10.8" rx="1" fill="none" stroke="#111" strokeWidth="1.2" />
            </svg>
          </WindowButton>
          <WindowButton aria-label="关闭">
            <svg width="12" height="12" viewBox="0 0 12 12">
              <path d="M.4.4L11.6 11.6M11.6.4L.4 11.6" stroke="#111" strokeWidth="1.2" />
            </svg>
          </WindowButton>
        </TitleBar>

        <MenuBar>
          {menus.map(([name, key]) => (
            <MenuButton key={key}>
              {name}(<u>{key}</u>)
            </MenuButton>
          ))}
        </MenuBar>

        <Toolbar>
          <ToolButton aria-label="后退">
            <ArrowIcon />
          </ToolButton>
          <ToolButton aria-label="前进" $gap={9}>
            <ArrowIcon forward />
          </ToolButton>
          <ToolDivider $gap={6} />
          <ToolButton aria-label="上一级" $gap={12}>
            <FolderUpIcon />
          </ToolButton>
          <ToolButton aria-label="显示控制台树" $on $gap={5}>
            <PanelIcon />
          </ToolButton>
          <ToolDivider $gap={1} />
          <ToolButton aria-label="帮助" $gap={11}>
            <HelpBookIcon />
          </ToolButton>
        </Toolbar>

        <Workspace>
          <Sidebar>
            <SideTree>
              {sideNodes.map((node) => (
                <SideRow key={node.label} $level={node.level}>
                  {node.level > 0 && <Twisty>{node.open !== undefined && <Chevron open={node.open} />}</Twisty>}
                  <TreeButton $selected={node.selected}>
                    {node.icon}
                    {node.label}
                  </TreeButton>
                </SideRow>
              ))}
            </SideTree>
          </Sidebar>

          <Console>
            <AddressBar>
              <NavPill />
              <Breadcrumb>
                <CrumbIcon>
                  <Globe />
                </CrumbIcon>
                <CrumbArrow />
                <Crumb href="#" $host>
                  DESKTOP-VBBVUON
                </Crumb>
                <CrumbArrow />
                <Crumb href="#">网站</Crumb>
                <CrumbArrow />
                <Crumb href="#">FTP_test</Crumb>
                <CrumbArrow />
              </Breadcrumb>
              <AddressTools>
                <ToolButton aria-label="刷新">
                  <RefreshIcon />
                </ToolButton>
                <ToolButton aria-label="停止">
                  <StopIcon />
                </ToolButton>
                <ToolButton aria-label="主页">
                  <HomeIcon />
                </ToolButton>
                <AddressDivider />
                <HelpMenu>
                  <ToolButton aria-label="帮助">
                    <HelpCircleIcon />
                  </ToolButton>
                  <DownArrow color="#000" />
                </HelpMenu>
              </AddressTools>
            </AddressBar>

            <Panes>
              <Pane $width={241}>
                <PaneTitle>连接</PaneTitle>
                <PaneTools>
                  <ToolButton aria-label="上一级">
                    <FolderUpIcon />
                  </ToolButton>
                  <GripLine />
                </PaneTools>
                <SiteTree>
                  {siteNodes.map((node) => (
                    <SiteRow key={node.label} $level={node.level}>
                      {node.branch}
                      <SiteButton>
                        {node.icon}
                        <SiteLabel $selected={node.selected}>{node.label}</SiteLabel>
                      </SiteButton>
                    </SiteRow>
                  ))}
                </SiteTree>
              </Pane>

              <Pane>
                <PageHead>
                  <Globe size={39} />
                  <PageTitle>FTP_test 主页</PageTitle>
                </PageHead>
                <FeatureBox>
                  <FilterBar>
                    <label htmlFor="filter">筛选:</label>
                    <FilterField>
                      <FilterInput id="filter" />
                      <FilterDrop aria-label="筛选历史" />
                    </FilterField>
                    <StartButton>
                      <FunnelIcon />
                      <span>
                        开始(<u>G</u>)
                      </span>
                    </StartButton>
                    <StartButton aria-label="开始选项">
                      <svg width="16" height="5" viewBox="-8 0 16 5" aria-hidden="true">
                        <path d="M.4.4H7.6L4 4.6Z" fill="#99979b" />
                      </svg>
                    </StartButton>
                    <Overflow aria-label="更多">
                      <svg width="8" height="9" viewBox="0 0 8 9" aria-hidden="true">
                        <path d="M.6 1.4H7.4" stroke="#000" strokeWidth="1.4" />
                        <path d="M.6 4.4H7.4L4 8Z" fill="#000" />
                      </svg>
                    </Overflow>
                  </FilterBar>
                  <Group title="FTP" line="#e3e9f6">
                    {ftpTiles.map((tile) => (
                      <Tile key={tile.label} $selected={tile.selected}>
                        <Icon size={40} box={40}>
                          {tile.art}
                        </Icon>
                        {tile.label}
                      </Tile>
                    ))}
                  </Group>
                  <Group title="管理" line="#a9c0dc">
                    <Tile aria-label="配置编辑器">
                      <Icon size={40} box={40}>
                        <ConfigArt />
                      </Icon>
                    </Tile>
                  </Group>
                </FeatureBox>
              </Pane>

              <Pane $width={250} $tint>
                <PaneTitle>操作</PaneTitle>
                <ActionBody>
                  <Action>打开功能</Action>
                  <Rule />
                  <Action icon={<BrowseIcon />}>浏览</Action>
                  <Action>编辑权限...</Action>
                  <Rule />
                  <ActionHeading>编辑网站</ActionHeading>
                  <Action>绑定...</Action>
                  <Action icon={<SettingsIcon />}>基本设置...</Action>
                  <Rule />
                  <Action>查看应用程序</Action>
                  <Action>查看虚拟目录</Action>
                  <Rule />
                  <ActionSection>
                    <SectionTitle>管理 FTP 站点</SectionTitle>
                    <ToolButton aria-label="折叠">
                      <CollapseIcon />
                    </ToolButton>
                  </ActionSection>
                  <Action>重新启动</Action>
                  <ActionRow>
                    <ActionIcon />
                    <ActionDisabled>启动</ActionDisabled>
                  </ActionRow>
                  <Action>停止</Action>
                  <Rule />
                  <Action>高级设置...</Action>
                  <Rule />
                  <Action icon={<HelpCircleIcon />}>帮助</Action>
                </ActionBody>
              </Pane>
            </Panes>
          </Console>
        </Workspace>

        <Frame $side="left" $x={46} $y={393} $w={224} $h={33} />
        <Step $side="left" $x={5} $y={393}>1</Step>
        <Frame $side="left" $x={314} $y={295} $w={127} $h={31} />
        <Step $side="left" $x={268} $y={295}>2</Step>
        <Frame $side="left" $x={508} $y={446} $w={124} $h={94} />
        <Step $side="left" $x={459} $y={476}>3</Step>
        <Frame $side="right" $x={112} $y={235} $w={120} $h={31} />
        <Step $side="right" $x={249} $y={234}>4</Step>
      </Window>
    </>
  );
}
